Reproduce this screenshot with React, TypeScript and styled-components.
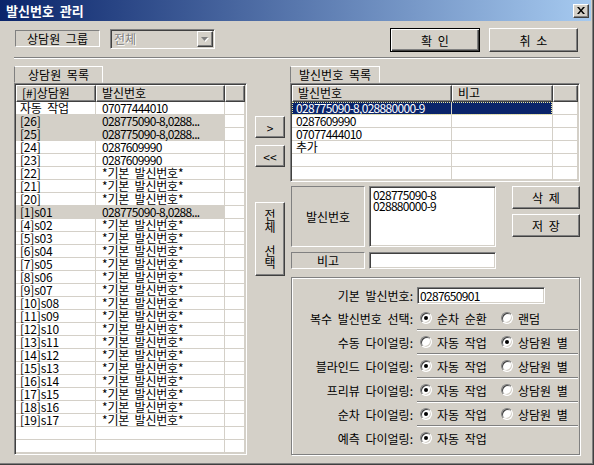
import React from 'react';
import styled, { createGlobalStyle, css } from 'styled-components';

const GlobalStyle = createGlobalStyle`
  * { box-sizing: border-box; }
  html, body { margin: 0; padding: 0; background: #d4d0c8; }
  body {
    font-family: "Noto Sans CJK KR", "Noto Sans", sans-serif;
    font-size: 12px;
    color: #000;
    word-spacing: 3px;
  }
`;

const raisedEdge = css`
  border: 1px solid;
  border-color: #fff #404040 #404040 #fff;
  box-shadow: inset -1px -1px #808080;
`;

const sunkenEdge = css`
  border: 1px solid;
  border-color: #808080 #fff #fff #808080;
  padding: 1px;
  box-shadow: inset 1px 1px #404040, inset -1px -1px #d4d0c8;
`;

const Window = styled.div`
  width: 594px;
  height: 465px;
  display: flex;
  flex-direction: column;
  background: #d4d0c8;
  border-right: 1px solid #404040;
  border-bottom: 1px solid #404040;
  box-shadow: inset -1px -1px #808080;
  padding: 0 2px 2px 0;
  overflow: hidden;
`;

const TitleBar = styled.div`
  flex: none;
  height: 21px;
  display: flex;
  align-items: center;
  justify-content: space-between;
  padding: 0 2px 0 6px;
  background: linear-gradient(to right, #0a246a, #a6caf0);
`;

const Title = styled.span`
  color: #fff;
  font-weight: bold;
  font-size: 13px;
  line-height: 16px;
`;

const CloseButton = styled.div`
  ${raisedEdge};
  width: 16px;
  height: 14px;
  background: #d4d0c8;
  display: flex;
  align-items: center;
  justify-content: center;
`;

const Body = styled.div`
  flex: 1;
  display: flex;
  flex-direction: column;
  padding: 7px 11px 0 14px;
`;

const TopRow = styled.div`
  display: flex;
  align-items: flex-start;
  height: 25px;
  padding-right: 2px;
`;

const StaticBox = styled.div<{ $w: number; $h: number }>`
  width: ${(p) => p.$w}px;
  height: ${(p) => p.$h}px;
  border: 1px solid;
  border-color: #808080 #fff #fff #808080;
  display: flex;
  align-items: center;
  justify-content: center;
  white-space: nowrap;
  line-height: 13px;
`;

const GroupLabel = styled(StaticBox)`
  margin: 2px 0 0 1px;
`;

const Combo = styled.div`
  ${sunkenEdge};
  margin: 1px 0 0 10px;
  width: 105px;
  height: 20px;
  display: flex;
  background: #d4d0c8;
`;

const ComboText = styled.span`
  flex: 1;
  padding-left: 2px;
  line-height: 16px;
  color: #808080;
  text-shadow: 1px 1px #fff;
`;

const ComboArrow = styled.div`
  ${raisedEdge};
  width: 16px;
  height: 16px;
  display: flex;
  align-items: center;
  justify-content: center;
`;

const Spacer = styled.div`
  flex: 1;
`;

const DialogButton = styled.button<{ $w: number; $h: number; $default?: boolean }>`
  width: ${(p) => p.$w}px;
  height: ${(p) => p.$h}px;
  flex: none;
  padding: 0;
  margin: 0;
  font: inherit;
  line-height: 13px;
  word-spacing: inherit;
  color: #000;
  background: #d4d0c8;
  ${raisedEdge};
  ${(p) =>
    p.$default &&
    css`
      border-color: #000;
      box-shadow: inset 1px 1px #fff, inset -1px -1px #404040, inset -2px -2px #808080;
    `}
`;

const CancelButton = styled(DialogButton)`
  margin-left: 9px;
`;

const Separator = styled.div`
  margin-top: 4px;
  height: 2px;
  border-top: 1px solid #808080;
  border-bottom: 1px solid #fff;
`;

const Main = styled.div`
  margin-top: 7px;
  height: 389px;
  display: flex;
`;

const LeftCol = styled.div`
  width: 233px;
  display: flex;
  flex-direction: column;
`;

const MidCol = styled.div`
  width: 30px;
  margin-left: 8px;
  display: flex;
  flex-direction: column;
`;

const RightCol = styled.div`
  width: 290px;
  margin-left: 5px;
  display: flex;
  flex-direction: column;
`;

const PanelLabel = styled.div<{ $w: number }>`
  width: ${(p) => p.$w}px;
  height: 17px;
  flex: none;
  border: 1px solid;
  border-color: #fff #fff #d4d0c8 #808080;
  display: flex;
  align-items: center;
  justify-content: center;
  white-space: nowrap;
  line-height: 13px;
`;

const ListView = styled.div<{ $h: number }>`
  ${sunkenEdge};
  height: ${(p) => p.$h}px;
  flex: none;
  background: #fff;
  overflow: hidden;
`;

const ListRow = styled.div<{ $cols: string }>`
  position: relative;
  display: grid;
  grid-template-columns: ${(p) => p.$cols};
`;

const HeaderCell = styled.div`
  ${raisedEdge};
  height: 17px;
  line-height: 14px;
  padding-left: 5px;
  background: #d4d0c8;
  white-space: nowrap;
`;

type Sel = 'active' | 'inactive' | undefined;

const Cell = styled.div<{ $first?: boolean; $sel?: Sel; $num?: boolean }>`
  height: 13px;
  line-height: 12px;
  padding-left: ${(p) => (p.$first ? 4 : 6)}px;
  border-right: 1px solid #d4d0c8;
  border-bottom: 1px solid #d4d0c8;
  white-space: nowrap;
  letter-spacing: ${(p) => (p.$num ? '-0.7px' : '-0.2px')};
  background: ${(p) => (p.$sel === 'active' ? '#0a246a' : p.$sel === 'inactive' ? '#d4d0c8' : '#fff')};
  color: ${(p) => (p.$sel === 'active' ? '#fff' : '#000')};
`;

const FocusRect = styled.div<{ $w: number }>`
  position: absolute;
  left: 0;
  top: 0;
  width: ${(p) => p.$w}px;
  height: 13px;
  border: 1px dotted #e8e8a0;
  pointer-events: none;
`;

const ArrowButton = styled(DialogButton)<{ $top: number }>`
  margin-top: ${(p) => p.$top}px;
`;

const VerticalText = styled.span`
  display: block;
  white-space: pre-line;
  line-height: 12px;
`;

const DetailRow = styled.div<{ $h: number; $top: number }>`
  display: flex;
  align-items: flex-start;
  height: ${(p) => p.$h}px;
  margin-top: ${(p) => p.$top}px;
  flex: none;
`;

const FieldLabel = styled(StaticBox)`
  margin-left: 1px;
`;

const TextArea = styled.div<{ $h: number }>`
  ${sunkenEdge};
  margin-left: 4px;
  width: 127px;
  height: ${(p) => p.$h}px;
  background: #fff;
  padding: 2px 3px;
  line-height: 11px;
  white-space: pre;
  letter-spacing: -0.7px;
`;

const ButtonStack = styled.div`
  margin-left: 16px;
  display: flex;
  flex-direction: column;
  gap: 5px;
`;

const GroupBox = styled.div`
  margin: 8px 0 0 1px;
  height: 178px;
  flex: none;
  border: 1px solid #808080;
  box-shadow: inset 1px 1px #fff, 1px 1px #fff;
  padding-top: 5px;
`;

const OptionRow = styled.div<{ $h: number }>`
  display: flex;
  align-items: center;
  height: ${(p) => p.$h}px;
  white-space: nowrap;
  line-height: 13px;
`;

const OptionLabel = styled.div`
  width: 121px;
  text-align: right;
`;

const TextInput = styled.div`
  ${sunkenEdge};
  margin-left: 4px;
  width: 128px;
  height: 17px;
  background: #fff;
  line-height: 13px;
  padding-left: 2px;
  letter-spacing: -0.7px;
`;

const RadioGroup = styled.div`
  display: flex;
  margin-left: 7px;
`;

const RadioOption = styled.span<{ $w?: number }>`
  display: inline-flex;
  align-items: center;
  gap: 5px;
  width: ${(p) => (p.$w ? `${p.$w}px` : 'auto')};
`;

const RadioCircle = styled.span<{ $checked: boolean }>`
  position: relative;
  width: 12px;
  height: 12px;
  flex: none;
  border-radius: 50%;
  background: #fff;
  border: 1px solid;
  border-color: #808080 #fff #fff #808080;
  box-shadow: inset 1px 1px #404040, inset -1px -1px #d4d0c8;
  &::after {
    content: '';
    display: ${(p) => (p.$checked ? 'block' : 'none')};
    position: absolute;
    left: 3px;
    top: 3px;
    width: 4px;
    height: 4px;
    border-radius: 50%;
    background: #000;
  }
`;

const RowRule = styled.div`
  margin: 0 1px 0 125px;
  height: 2px;
  border-top: 1px solid #808080;
  border-bottom: 1px solid #fff;
`;

const DEFAULT_NO = '*기본 발신번호*';
const MULTI_NO = '028775090-8,0288...';

const agentRows: { name: string; no: string; sel?: boolean }[] = [
  { name: '자동 작업', no: '07077444010' },
  { name: '[26]', no: MULTI_NO, sel: true },
  { name: '[25]', no: MULTI_NO, sel: true },
  { name: '[24]', no: '0287609990' },
  { name: '[23]', no: '0287609990' },
  { name: '[22]', no: DEFAULT_NO },
  { name: '[21]', no: DEFAULT_NO },
  { name: '[20]', no: DEFAULT_NO },
  { name: '[1]s01', no: MULTI_NO, sel: true },
  ...[4, 5, 6, 7, 8, 9, 10, 11, 12, 13, 14, 15, 16, 17, 18, 19].map((n, i) => ({
    name: `[${n}]s${String(i + 2).padStart(2, '0')}`,
    no: DEFAULT_NO,
  })),
  { name: '', no: '' },
  { name: '', no: '' },
];

const numberRows = ['028775090-8,028880000-9', '0287609990', '07077444010', '추가', '', ''];

const dialingRows = [
  { label: '수동 다이얼링:', auto: false },
  { label: '블라인드 다이얼링:', auto: true },
  { label: '프리뷰 다이얼링:', auto: true },
  { label: '순차 다이얼링:', auto: true },
];

const isNum = (s: string) => /^[0-9,.\-]+$/.test(s);

const Radio = ({ checked, label, w }: { checked: boolean; label: string; w?: number }) => (
  <RadioOption $w={w}>
    <RadioCircle $checked={checked} />
    {label}
  </RadioOption>
);

const LEFT_COLS = '80px 129px 20px';
const RIGHT_COLS = '160px 101px 25px';

export default function App() {
  return (
    <Window>
      <GlobalStyle />
      <TitleBar>
        <Title>발신번호 관리</Title>
        <CloseButton>
          <svg width="8" height="7" viewBox="0 0 8 7">
            <path d="M0 0h2l2 2.4L6 0h2L5 3.5 8 7H6L4 4.6 2 7H0l3-3.5z" fill="#000" />
          </svg>
        </CloseButton>
      </TitleBar>
      <Body>
        <TopRow>
          <GroupLabel $w={85} $h={17}>상담원 그룹</GroupLabel>
          <Combo>
            <ComboText>전체</ComboText>
            <ComboArrow>
              <svg width="8" height="5" viewBox="0 0 8 5">
                <path d="M1 1h7L4.5 5z" fill="#fff" />
                <path d="M0 0h7L3.5 4z" fill="#808080" />
              </svg>
            </ComboArrow>
          </Combo>
          <Spacer />
          <DialogButton $w={90} $h={24} $default>확 인</DialogButton>
          <CancelButton $w={89} $h={24}>취 소</CancelButton>
        </TopRow>
        <Separator />
        <Main>
          <LeftCol>
            <PanelLabel $w={89}>상담원 목록</PanelLabel>
            <ListView $h={372}>
              <ListRow $cols={LEFT_COLS}>
                <HeaderCell>[#]상담원</HeaderCell>
                <HeaderCell>발신번호</HeaderCell>
                <HeaderCell />
              </ListRow>
              {agentRows.map((r, i) => (
                <ListRow key={i} $cols={LEFT_COLS}>
                  <Cell $first $sel={r.sel ? 'inactive' : undefined}>{r.name}</Cell>
                  <Cell $sel={r.sel ? 'inactive' : undefined} $num={isNum(r.no.replace('...', ''))}>
                    {r.no}
                  </Cell>
                  <Cell />
                </ListRow>
              ))}
            </ListView>
          </LeftCol>
          <MidCol>
            <ArrowButton $w={30} $h={22} $top={50}>&gt;</ArrowButton>
            <ArrowButton $w={30} $h={22} $top={7}>&lt;&lt;</ArrowButton>
            <ArrowButton $w={30} $h={74} $top={35}>
              <VerticalText>{'전\n체\n\n선\n택'}</VerticalText>
            </ArrowButton>
          </MidCol>
          <RightCol>
            <PanelLabel $w={90}>발신번호 목록</PanelLabel>
            <ListView $h={99}>
              <ListRow $cols={RIGHT_COLS}>
                <HeaderCell>발신번호</HeaderCell>
                <HeaderCell>비고</HeaderCell>
                <HeaderCell />
              </ListRow>
              {numberRows.map((no, i) => (
                <ListRow key={i} $cols={RIGHT_COLS}>
                  <Cell $first $sel={i === 0 ? 'active' : undefined} $num={isNum(no)}>
                    {no}
                  </Cell>
                  <Cell $sel={i === 0 ? 'active' : undefined} />
                  <Cell />
                  {i === 0 && <FocusRect $w={260} />}
                </ListRow>
              ))}
            </ListView>
            <DetailRow $h={62} $top={4}>
              <FieldLabel $w={74} $h={61}>발신번호</FieldLabel>
              <TextArea $h={61}>{'028775090-8\n028880000-9'}</TextArea>
              <ButtonStack>
                <DialogButton $w={68} $h={23}>삭 제</DialogButton>
                <DialogButton $w={68} $h={23}>저 장</DialogButton>
              </ButtonStack>
            </DetailRow>
            <DetailRow $h={17} $top={4}>
              <FieldLabel $w={74} $h={17}>비고</FieldLabel>
              <TextArea $h={17} />
            </DetailRow>
            <GroupBox>
              <OptionRow $h={24}>
                <OptionLabel>기본 발신번호:</OptionLabel>
                <TextInput>0287650901</TextInput>
              </OptionRow>
              <OptionRow $h={22}>
                <OptionLabel>복수 발신번호 선택:</OptionLabel>
                <RadioGroup>
                  <Radio checked label="순차 순환" w={81} />
                  <Radio checked={false} label="랜덤" />
                </RadioGroup>
              </OptionRow>
              <RowRule />
              {dialingRows.map((r) => (
                <React.Fragment key={r.label}>
                  <OptionRow $h={22}>
                    <OptionLabel>{r.label}</OptionLabel>
                    <RadioGroup>
                      <Radio checked={r.auto} label="자동 작업" w={81} />
                      <Radio checked={!r.auto} label="상담원 별" />
                    </RadioGroup>
                  </OptionRow>
                  <RowRule />
                </React.Fragment>
              ))}
              <OptionRow $h={22}>
                <OptionLabel>예측 다이얼링:</OptionLabel>
                <RadioGroup>
                  <Radio checked label="자동 작업" />
                </RadioGroup>
              </OptionRow>
            </GroupBox>
          </RightCol>
        </Main>
      </Body>
    </Window>
  );
}
